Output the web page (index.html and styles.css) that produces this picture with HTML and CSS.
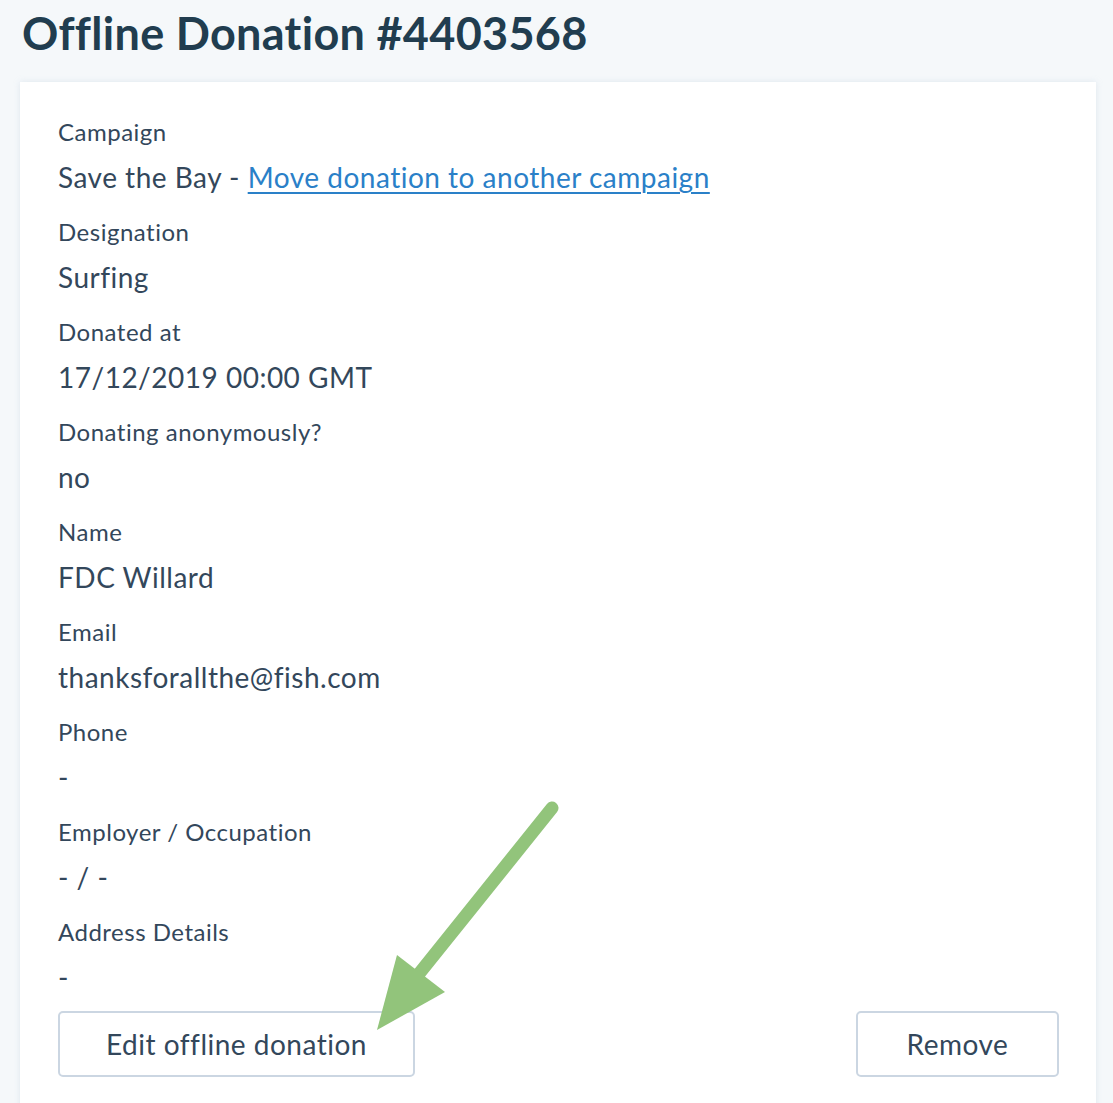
FILE: index.html
```html
<!DOCTYPE html>
<html>
<head>
<meta charset="utf-8">
<link rel="stylesheet" href="styles.css">
</head>
<body>
<div class="page">
  <h1 class="title">Offline Donation #4403568</h1>
  <div class="card">
    <div class="field">
      <div class="label">Campaign</div>
      <div class="value">Save the Bay - <a class="link" href="#">Move donation to another campaign</a></div>
    </div>
    <div class="field">
      <div class="label">Designation</div>
      <div class="value">Surfing</div>
    </div>
    <div class="field">
      <div class="label">Donated at</div>
      <div class="value">17/12/2019 00:00 GMT</div>
    </div>
    <div class="field">
      <div class="label">Donating anonymously?</div>
      <div class="value">no</div>
    </div>
    <div class="field">
      <div class="label">Name</div>
      <div class="value">FDC Willard</div>
    </div>
    <div class="field">
      <div class="label">Email</div>
      <div class="value">thanksforallthe@fish.com</div>
    </div>
    <div class="field">
      <div class="label">Phone</div>
      <div class="value">-</div>
    </div>
    <div class="field">
      <div class="label">Employer / Occupation</div>
      <div class="value">- / -</div>
    </div>
    <div class="field">
      <div class="label">Address Details</div>
      <div class="value">-</div>
    </div>
    <div class="actions">
      <button class="btn btn-edit">Edit offline donation</button>
      <button class="btn btn-remove">Remove</button>
    </div>
  </div>
  <svg class="arrow" width="1113" height="1103" viewBox="0 0 1113 1103">
    <line x1="552" y1="808" x2="418" y2="975" stroke="#92c47b" stroke-width="13" stroke-linecap="round"/>
    <polygon points="377,1030 397,955 445,992" fill="#92c47b"/>
  </svg>
</div>
</body>
</html>
```

FILE: styles.css
```css
html, body {
  margin: 0;
  padding: 0;
  background: #f5f8fa;
}
body {
  font-family: Lato, "Open Sans", sans-serif;
  color: #33475b;
  overflow: hidden;
}
.page {
  position: relative;
  width: 1113px;
  height: 1103px;
  padding: 0 17px 0 20px;
  box-sizing: border-box;
}
.title {
  margin: 0;
  padding: 7px 0 0 2px;
  height: 82px;
  box-sizing: border-box;
  font-size: 45px;
  line-height: 52px;
  letter-spacing: 0.3px;
  font-weight: 700;
  color: #213d4f;
}
.card {
  background: #fff;
  padding: 35px 37px 40px 38px;
  box-shadow: 0 0 6px rgba(180, 200, 220, 0.35);
}
.field {
  margin-bottom: 20px;
}
.label {
  font-size: 24px;
  line-height: 30px;
  letter-spacing: 0.5px;
  margin-bottom: 10px;
}
.value {
  font-size: 28px;
  line-height: 40px;
  letter-spacing: 0.5px;
}
.link {
  color: #2a80c8;
  text-decoration: underline;
  text-decoration-thickness: 2px;
  text-underline-offset: 4px;
}
.actions {
  display: flex;
  justify-content: space-between;
  margin-top: -6px;
}
.btn {
  font-family: inherit;
  color: #33475b;
  background: #fff;
  border: 2px solid #cbd6e2;
  border-radius: 5px;
  height: 66px;
  font-size: 28px;
  letter-spacing: 0.5px;
  padding: 0;
}
.btn-edit {
  width: 357px;
}
.btn-remove {
  width: 203px;
}
.arrow {
  position: absolute;
  left: 0;
  top: 0;
  pointer-events: none;
}
```
